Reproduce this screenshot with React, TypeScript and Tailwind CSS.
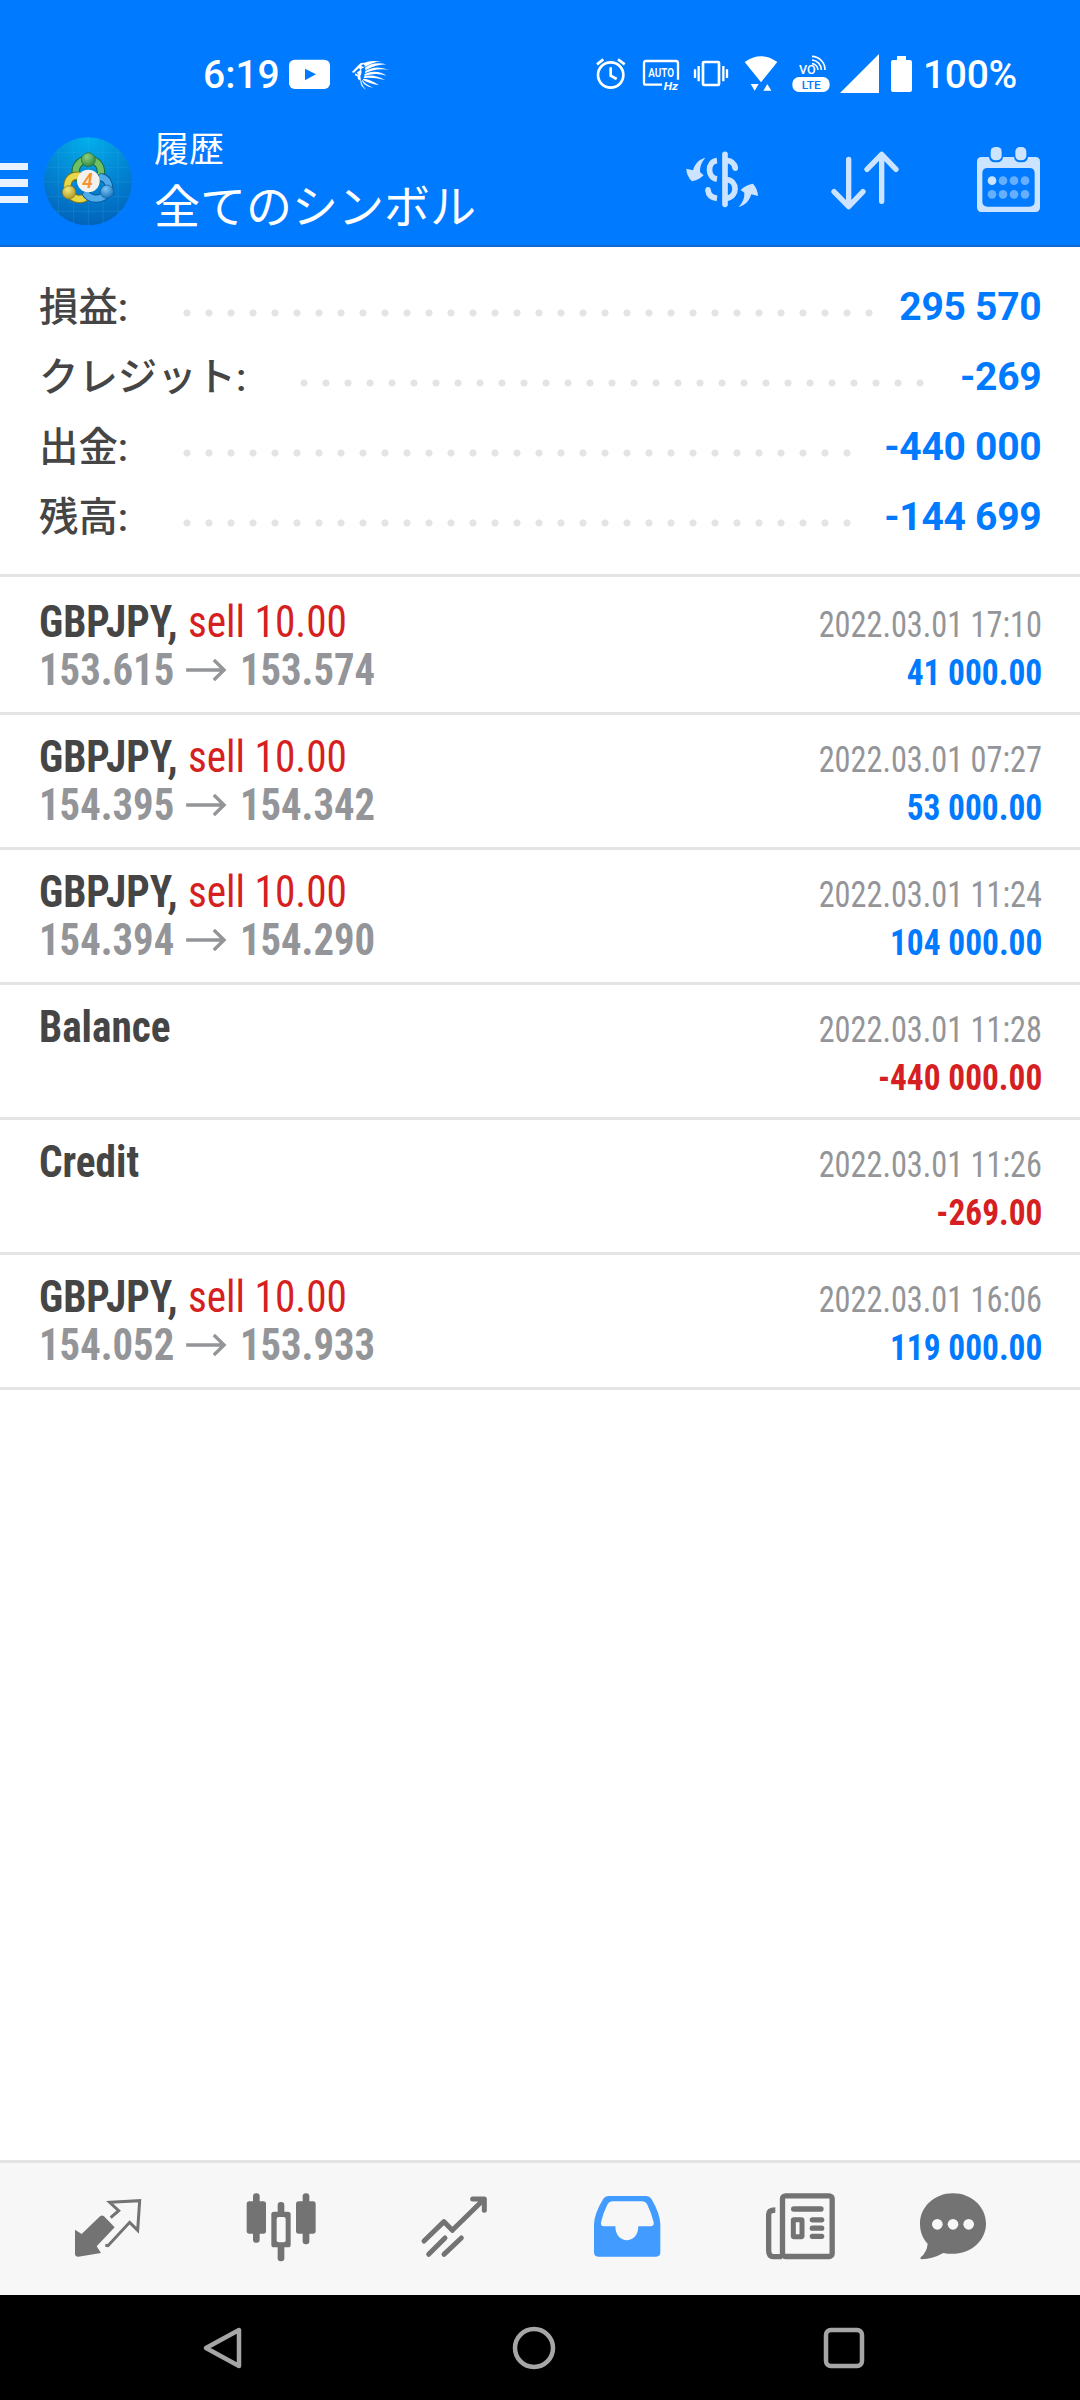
import type { ReactNode } from "react";

type Deal = {
  name: string;
  side?: string;
  open?: string;
  close?: string;
  time: string;
  amount: string;
};

const SUMMARY = [
  { label: "損益:", value: "295 570", offset: 183, dots: 32 },
  { label: "クレジット:", value: "-269", offset: 300, dots: 29 },
  { label: "出金:", value: "-440 000", offset: 183, dots: 31 },
  { label: "残高:", value: "-144 699", offset: 183, dots: 31 },
];

const DEALS: Deal[] = [
  { name: "GBPJPY,", side: "sell 10.00", open: "153.615", close: "153.574", time: "2022.03.01 17:10", amount: "41 000.00" },
  { name: "GBPJPY,", side: "sell 10.00", open: "154.395", close: "154.342", time: "2022.03.01 07:27", amount: "53 000.00" },
  { name: "GBPJPY,", side: "sell 10.00", open: "154.394", close: "154.290", time: "2022.03.01 11:24", amount: "104 000.00" },
  { name: "Balance", time: "2022.03.01 11:28", amount: "-440 000.00" },
  { name: "Credit", time: "2022.03.01 11:26", amount: "-269.00" },
  { name: "GBPJPY,", side: "sell 10.00", open: "154.052", close: "153.933", time: "2022.03.01 16:06", amount: "119 000.00" },
];

// Icons are drawn on a 3x grid, so the rendered width is a third of the viewBox.
function Icon({ box, children }: { box: string; children: ReactNode }) {
  const [, , w, h] = box.split(" ").map(Number);
  return (
    <svg width={w / 3} height={h / 3} viewBox={box} fill="none" className="shrink-0">
      {children}
    </svg>
  );
}

function StatusBar() {
  return (
    <div className="flex h-[70px] items-start text-[39px] font-medium leading-[70px] text-white">
      <span className="w-[285px] pl-[203px]">6:19</span>
      <Icon box="315 0 150 210">
        <rect x="327" y="59" width="123" height="88" rx="17" fill="#fff" />
        <path d="M375 86L408 103L375 121Z" fill="#007aff" />
      </Icon>
      <Icon box="465 0 195 210">
        <g fill="#fff">
          <path d="M515 97L536 75Q541 66 556 69Q546 73 543 78L553 82L543 87Q547 99 541 108L543 123L534 118L532 108L526 107L524 98Z" />
          <path d="M547 72Q567 58 604 65Q579 64 553 82Q558 74 547 72Z" />
          <path d="M555 83Q579 64 619 73Q588 73 556 91Z" />
          <path d="M556 93Q588 73 627 90Q592 83 555 100Z" />
          <path d="M554 102Q590 86 620 107Q588 96 553 108Z" />
          <path d="M553 109Q580 100 615 120Q584 112 551 114Z" />
          <path d="M551 116Q569 116 597 136Q566 130 548 119Z" />
          <path d="M547 120Q556 134 580 143Q550 139 545 120Z" />
          <path d="M544 123Q547 140 559 149Q542 143 541 123Z" />
        </g>
        <path d="M522 98L537 84L541 90L530 98L537 106Z" fill="#007aff" />
      </Icon>

      <div className="ml-[193px] flex items-start">
        <Icon box="39 0 120 210">
          <g stroke="#fff" strokeWidth="8">
            <circle cx="92" cy="105" r="38" />
            <path d="M92 82V107L110 117M51 73L70 58M114 58L134 73" />
          </g>
        </Icon>
        <Icon box="159 0 165 210">
          <path d="M246 134H198Q192 134 192 128V70Q192 63 198 63H288Q294 63 294 70V119" stroke="#fff" strokeWidth="7" />
          <text x="205" y="110" fontSize="36" fontWeight="600" textLength="77" lengthAdjust="spacingAndGlyphs" fill="#fff">AUTO</text>
          <text x="251" y="150" fontSize="32" fontWeight="700" fontStyle="italic" textLength="43" lengthAdjust="spacingAndGlyphs" fill="#fff">Hz</text>
        </Icon>
        <Icon box="324 0 132 210">
          <rect x="369" y="66" width="48" height="69" rx="3" stroke="#fff" strokeWidth="8" />
          <path d="M356 78V124M345 88V114M430 78V124M441 88V114" stroke="#fff" strokeWidth="7" />
        </Icon>
        <Icon box="456 0 162 210">
          <path d="M494 66Q543 31 592 66L543 127ZM512 132H536L524 152ZM550 152H574L562 132Z" fill="#fff" />
        </Icon>
        <Icon box="618 0 150 210">
          <text x="657" y="101" fontSize="39" fontWeight="500" textLength="50" lengthAdjust="spacingAndGlyphs" fill="#fff">VO</text>
          <path d="M696 71A20 20 0 0 1 714 90M696 60A30 30 0 0 1 724 90M696 49A40 40 0 0 1 735 90" stroke="#fff" strokeWidth="5" />
          <rect x="637" y="111" width="112" height="45" rx="20" fill="#fff" />
          <text x="665" y="146" fontSize="35" fontWeight="500" textLength="57" lengthAdjust="spacingAndGlyphs" fill="#007aff">LTE</text>
        </Icon>
        <Icon box="48 0 135 210">
          <path d="M60 159L177 42V159Z" fill="#fff" />
        </Icon>
        <Icon box="183 0 114 210">
          <path d="M231 60V48H258V60H270Q276 60 276 66V150Q276 156 270 156H219Q213 156 213 150V66Q213 60 219 60Z" fill="#fff" />
        </Icon>
        <span className="pl-[4px] tracking-[-0.3px]">100%</span>
      </div>
    </div>
  );
}

function AppLogo() {
  return (
    <Icon box="132 50 264 266">
      <defs>
        <radialGradient id="disc" cx="0.5" cy="0" r="1">
          <stop offset="0" stopColor="#02b0ec" />
          <stop offset="0.55" stopColor="#0284d2" />
          <stop offset="1" stopColor="#0263bb" />
        </radialGradient>
        <radialGradient id="green" cx="0.4" cy="0.3" r="0.8">
          <stop offset="0" stopColor="#8fd07f" />
          <stop offset="1" stopColor="#23803a" />
        </radialGradient>
        <radialGradient id="yellow" cx="0.4" cy="0.3" r="0.8">
          <stop offset="0" stopColor="#f3e77a" />
          <stop offset="1" stopColor="#a8901a" />
        </radialGradient>
        <radialGradient id="blue" cx="0.4" cy="0.3" r="0.8">
          <stop offset="0" stopColor="#7cc6f4" />
          <stop offset="1" stopColor="#0d68b4" />
        </radialGradient>
      </defs>
      <circle cx="264" cy="183" r="132" fill="url(#disc)" />
      <path d="M176 85V282M221 58V308M265 52V314M309 58V308M354 85V282M165 97H364M139 141H389M132 185H396M139 229H389M165 273H364" stroke="#45b6ee" strokeOpacity="0.3" strokeWidth="2" />
      <g strokeLinecap="round">
        <path d="M231 171C220 142 235 119 265 118C297 119 310 145 299 174" stroke="#1d6b35" strokeWidth="25" />
        <path d="M231 171C220 142 235 119 265 118C297 119 310 145 299 174" stroke="#6fbf63" strokeWidth="19" />
        <path d="M236 166C206 164 196 190 206 216C217 237 241 241 258 230" stroke="#83751d" strokeWidth="25" />
        <path d="M236 166C206 164 196 190 206 216C217 237 241 241 258 230" stroke="#e6d846" strokeWidth="19" />
        <path d="M259 222C273 238 301 240 320 222C334 205 326 176 305 171" stroke="#0c599b" strokeWidth="25" />
        <path d="M259 222C273 238 301 240 320 222C334 205 326 176 305 171" stroke="#4fabea" strokeWidth="19" />
      </g>
      <circle cx="265" cy="118" r="21" fill="url(#green)" stroke="#1d6b35" strokeWidth="2" />
      <circle cx="207" cy="216" r="20" fill="url(#yellow)" stroke="#83751d" strokeWidth="2" />
      <circle cx="321" cy="214" r="20" fill="url(#blue)" stroke="#0c599b" strokeWidth="2" />
      <circle cx="265" cy="182" r="34" fill="#f3f1ee" />
      <text x="247" y="203" fontSize="58" fontWeight="600" fontStyle="italic" textLength="32" lengthAdjust="spacingAndGlyphs" fill="#f59331">4</text>
    </Icon>
  );
}

function Header() {
  return (
    <header className="h-[247px] border-b-2 border-[#1268cc] bg-[#007aff] pt-10">
      <StatusBar />
      <div className="flex h-[135px] items-center pt-[7px]">
        <div className="mt-[4px] flex w-[44px] shrink-0 flex-col gap-[9px]">
          <span className="h-[7.5px] w-[28px] bg-[#e8f3ff]" />
          <span className="h-[7.5px] w-[28px] bg-[#e8f3ff]" />
          <span className="h-[7.5px] w-[28px] bg-[#e8f3ff]" />
        </div>
        <AppLogo />
        <div className="ml-[22px] w-[526px] shrink-0 pb-px text-white">
          <p className="text-[35px] leading-[53px]">履歴</p>
          <h1 className="text-[46px] leading-[60px]">全てのシンボル</h1>
        </div>
        <Icon box="60 0 252 306">
          <g stroke="#cce4ff" strokeWidth="17">
            <path d="M195 73V223" strokeLinecap="round" />
            <path d="M171 92C141 95 141 143 171 147M144 180C145 194 155 203 171 205" />
            <path d="M200 91C215 92 223 100 226 115M200 149C233 152 234 200 200 205" />
          </g>
          <circle cx="144" cy="179" r="8" fill="#cce4ff" />
          <circle cx="226" cy="115" r="8" fill="#cce4ff" />
          <path d="M136 83C117 88 106 99 99 121L79 116Q79 137 96 154Q115 151 131 136L120 126C119 111 124 97 136 83Z" fill="#cce4ff" />
          <path d="M236 231C255 226 267 215 274 193L294 198Q293 177 279 161Q259 163 242 180L253 188C254 203 249 217 236 231Z" fill="#cce4ff" />
        </Icon>
        <div className="ml-[63px] shrink-0">
          <Icon box="501 0 228 306">
            <path d="M566 88V228M522 185L566 230L609 185M665 214V74M621 118L665 73L708 118" stroke="#cce4ff" strokeWidth="16" strokeLinecap="round" strokeLinejoin="round" />
          </Icon>
        </div>
        <div className="ml-[70px] shrink-0">
          <Icon box="939 0 213 306">
            <path fillRule="evenodd" d="M965 81H1126Q1140 81 1140 95V232Q1140 246 1126 246H965Q951 246 951 232V95Q951 81 965 81ZM983 114Q967 114 967 130V214Q967 230 983 230H1108Q1124 230 1124 214V130Q1124 114 1108 114Z" fill="#cce4ff" />
            <rect x="987" y="47" width="42" height="50" rx="17" fill="#007aff" />
            <rect x="1062" y="47" width="42" height="50" rx="17" fill="#007aff" />
            <rect x="992" y="51" width="33" height="40" rx="14" fill="#cce4ff" />
            <rect x="1066" y="51" width="33" height="40" rx="14" fill="#cce4ff" />
            <circle cx="996" cy="152" r="13" fill="#cce4ff" />
            <g fill="#66afff">
              <circle cx="1029" cy="152" r="13" />
              <circle cx="1062" cy="152" r="13" />
              <circle cx="1095" cy="152" r="13" />
              <circle cx="996" cy="193" r="13" />
              <circle cx="1029" cy="193" r="13" />
              <circle cx="1062" cy="193" r="13" />
              <circle cx="1095" cy="193" r="13" />
            </g>
          </Icon>
        </div>
      </div>
    </header>
  );
}

function Summary() {
  return (
    <section className="h-[330px] border-b-[3px] border-[#e4e4e4] pt-[25px]">
      {SUMMARY.map((row) => (
        <div key={row.label} className="flex h-[70px] items-center pr-[38.5px] text-[39px] leading-[70px]">
          <span
            className="mt-[2px] shrink-0 pl-[39px] text-[39.4px] font-medium text-[#454545]"
            style={{ width: row.offset - 7.5 }}
          >
            {row.label}
          </span>
          <span
            className="mt-[12px] h-[8px] shrink-0 bg-[radial-gradient(circle,#e4e4e4_3.2px,transparent_3.9px)] bg-[length:22px_8px] bg-repeat-x"
            style={{ width: row.dots * 22 }}
          />
          <span className="ml-auto font-bold tracking-[-0.25px] text-[#007aff]">{row.value}</span>
        </div>
      ))}
    </section>
  );
}

// The rows are set a little narrower than the condensed face, hence the x scaling.
function DealRow({ deal }: { deal: Deal }) {
  const negative = deal.amount.startsWith("-");
  return (
    <li className="h-[135px] border-b-[3px] border-[#e4e4e4] pl-[39px] pr-[38px] pt-[18px] font-stretch-[75%]">
      <div className="flex h-[48px] items-baseline text-[44px] leading-[48px]">
        <div className="origin-left scale-x-[0.938]">
          <span className="font-bold text-[#454545]">{deal.name}</span>
          {deal.side && <span className="ml-[11px] text-[#d61f22]">{deal.side}</span>}
        </div>
        <span className="ml-auto origin-right scale-x-[0.897] text-[36px] text-[#949599]">{deal.time}</span>
      </div>
      <div className="flex h-[48px] items-baseline text-[44px] leading-[48px]">
        <span className="flex origin-left scale-x-[0.925] items-center font-bold text-[#949599]">
          {deal.open ? (
            <>
              {deal.open}
              <svg width="44" height="22" viewBox="0 0 44 22" fill="none" className="ml-[13px] mr-[14px]">
                <path d="M0 11H41M30 1L41 11L30 21" stroke="#949599" strokeWidth="3.6" />
              </svg>
              {deal.close}
            </>
          ) : (
            "\u00a0"
          )}
        </span>
        <span className={`ml-auto origin-right scale-x-[0.927] text-[36px] font-bold ${negative ? "text-[#d61f22]" : "text-[#007aff]"}`}>
          {deal.amount}
        </span>
      </div>
    </li>
  );
}

function TabBar() {
  return (
    <nav className="flex h-[135px] gap-[101px] border-t-[3px] border-[#e4e4e4] bg-[#f7f7f7] pl-[72px] pt-[28px]">
      <Icon box="97 122 216 216">
        <path d="M106 238L126 251L181 198Q187 193 193 198L225 231L171 288L184 308L116 319Q106 319 106 310Z" fill="#737373" />
        <path d="M213 202L237 181L210 156L300 151L294 240L270 216L205 286L197 285" stroke="#737373" strokeWidth="9" />
      </Icon>
      <Icon box="615 122 216 216">
        <g fill="#737373">
          <rect x="620" y="153" width="58" height="97" rx="8" />
          <rect x="639" y="129" width="20" height="148" rx="9" />
          <rect x="768" y="153" width="59" height="97" rx="8" />
          <rect x="788" y="129" width="20" height="153" rx="9" />
          <rect x="713" y="155" width="20" height="178" rx="9" />
          <rect x="694" y="184" width="58" height="107" rx="8" />
        </g>
        <rect x="710" y="200" width="27" height="76" rx="6" fill="#f7f7f7" />
      </Icon>
      <Icon box="1134 122 216 216">
        <path d="M1152 272L1212 214L1237 240L1332 147M1298 146H1333V180M1166 312L1215 263M1212 312L1264 263" stroke="#737373" strokeWidth="15" strokeLinecap="round" strokeLinejoin="round" />
      </Icon>
      <Icon box="94 122 216 216">
        <path fillRule="evenodd" d="M146 137H260Q270 137 275 145Q301 189 302 222V306Q302 319 289 319H116Q103 319 103 306V222Q104 189 131 145Q136 137 146 137ZM158 153Q148 153 144 161Q130 188 124 216Q122 228 133 228H167C167 284 236 284 236 228H272Q284 228 282 216Q276 189 262 161Q258 153 248 153Z" fill="#429bff" />
      </Icon>
      <Icon box="614 122 216 216">
        <g stroke="#737373" strokeWidth="16">
          <rect x="669.5" y="136.5" width="149" height="182" rx="9" />
          <path d="M648 179Q628 179 628 192V300Q628 319 642 319H668" />
        </g>
        <rect x="695" y="168" width="98" height="16" rx="8" fill="#737373" />
        <rect x="702" y="208" width="26" height="51" rx="2" stroke="#737373" strokeWidth="15" />
        <path d="M759 208.5H787M759 233.5H787M759 258H787" stroke="#737373" strokeWidth="16" strokeLinecap="round" />
      </Icon>
      <div className="-ml-[20px]">
        <Icon box="1071 122 216 216">
          <path d="M1179 129C1235 129 1278 170 1278 220C1278 276 1222 322 1150 308Q1120 325 1084 327Q1079 326 1082 321Q1101 305 1103 280C1088 264 1080 244 1080 220C1080 170 1123 129 1179 129Z" fill="#737373" />
          <g fill="#f7f7f7">
            <circle cx="1132" cy="222" r="16" />
            <circle cx="1179" cy="222" r="16" />
            <circle cx="1226" cy="222" r="16" />
          </g>
        </Icon>
      </div>
    </nav>
  );
}

function SystemNav() {
  return (
    <div className="flex h-[105px] items-center bg-black pl-[200px]">
      <svg width="48" height="48" viewBox="0 0 48 48" fill="none">
        <path d="M39 6V42L6 24Z" stroke="#a6a6a6" strokeWidth="4.5" strokeLinejoin="round" />
      </svg>
      <svg width="48" height="48" viewBox="0 0 48 48" fill="none" className="ml-[262px]">
        <circle cx="24" cy="24" r="19" stroke="#a6a6a6" strokeWidth="4.5" />
      </svg>
      <svg width="48" height="48" viewBox="0 0 48 48" fill="none" className="ml-[262px]">
        <rect x="6" y="6" width="36" height="36" rx="5" stroke="#a6a6a6" strokeWidth="4.5" />
      </svg>
    </div>
  );
}

export default function App() {
  return (
    <div className="flex h-[2400px] w-[1080px] flex-col overflow-hidden bg-white font-['Roboto','Noto_Sans_CJK_JP',sans-serif]" lang="ja">
      <Header />
      <Summary />
      <ul className="flex-1 pt-[3px]">
        {DEALS.map((deal) => (
          <DealRow key={deal.time} deal={deal} />
        ))}
      </ul>
      <TabBar />
      <SystemNav />
    </div>
  );
}
